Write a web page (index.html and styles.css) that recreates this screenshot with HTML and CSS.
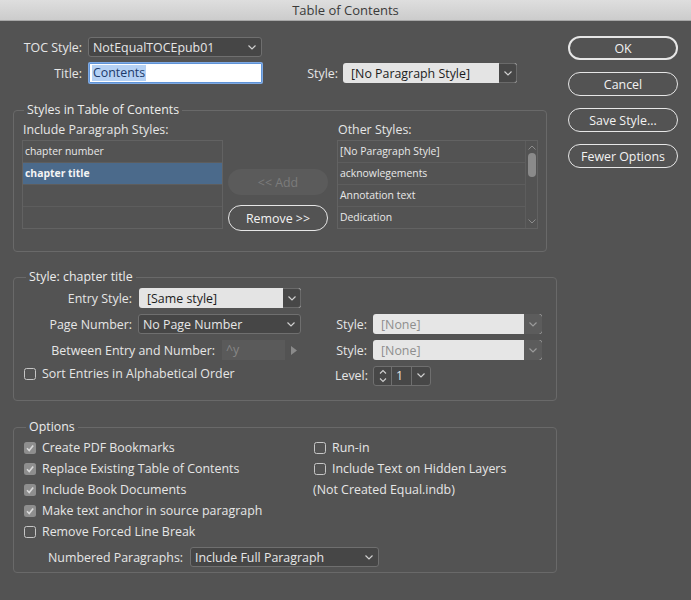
FILE: index.html
```html
<!DOCTYPE html>
<html>
<head>
<meta charset="utf-8">
<link rel="stylesheet" href="styles.css">
</head>
<body>
<div class="titlebar">Table of Contents</div>
<div class="body">
  <div class="main">
    <div class="toprow r1">
      <span class="lbl top-lbl">TOC Style:</span>
      <div class="select dark toc-sel"><span class="sel-text">NotEqualTOCEpub01</span><svg class="chev" width="8" height="5" viewBox="0 0 8 5"><polyline points="0.5,0.5 4,4 7.5,0.5"/></svg></div>
    </div>
    <div class="toprow r2">
      <span class="lbl top-lbl">Title:</span>
      <div class="input title-input"><span class="selected-text">Contents</span></div>
      <span class="lbl style-lbl">Style:</span>
      <div class="select light para-sel"><span class="sel-text">[No Paragraph Style]</span><span class="arrowbox"><svg class="chev" width="8" height="5" viewBox="0 0 8 5"><polyline points="0.5,0.5 4,4 7.5,0.5"/></svg></span></div>
    </div>

    <fieldset class="group g1">
      <legend>Styles in Table of Contents</legend>
      <div class="g1-row">
        <div class="col-list">
          <div class="caption">Include Paragraph Styles:</div>
          <div class="list">
            <div class="row">chapter number</div>
            <div class="row sel">chapter title</div>
            <div class="row"></div>
            <div class="row last"></div>
          </div>
        </div>
        <div class="col-mid">
          <div class="btn disabled add-btn">&lt;&lt; Add</div>
          <div class="btn remove-btn">Remove &gt;&gt;</div>
        </div>
        <div class="col-list col-other">
          <div class="caption">Other Styles:</div>
          <div class="list list-scroll">
            <div class="rows">
              <div class="row">[No Paragraph Style]</div>
              <div class="row">acknowlegements</div>
              <div class="row">Annotation text</div>
              <div class="row last">Dedication</div>
            </div>
            <div class="scrollbar">
              <svg class="sb-arrow" width="8" height="5" viewBox="0 0 8 5"><polyline points="0.5,4.5 4,1 7.5,4.5"/></svg>
              <div class="thumb"></div>
              <svg class="sb-arrow down" width="8" height="5" viewBox="0 0 8 5"><polyline points="0.5,0.5 4,4 7.5,0.5"/></svg>
            </div>
          </div>
        </div>
      </div>
    </fieldset>

    <fieldset class="group g2">
      <legend>Style: chapter title</legend>
      <div class="g2-grid">
        <div class="cell">
          <span class="lbl lbl-entry">Entry Style:</span>
          <div class="select light entry-sel"><span class="sel-text">[Same style]</span><span class="arrowbox"><svg class="chev" width="8" height="5" viewBox="0 0 8 5"><polyline points="0.5,0.5 4,4 7.5,0.5"/></svg></span></div>
        </div>
        <div class="cell"></div>
        <div class="cell">
          <span class="lbl lbl-entry">Page Number:</span>
          <div class="select dark page-sel"><span class="sel-text">No Page Number</span><svg class="chev" width="8" height="5" viewBox="0 0 8 5"><polyline points="0.5,0.5 4,4 7.5,0.5"/></svg></div>
        </div>
        <div class="cell">
          <span class="lbl lbl-right">Style:</span>
          <div class="select light disabled none-sel"><span class="sel-text">[None]</span><span class="arrowbox"><svg class="chev" width="8" height="5" viewBox="0 0 8 5"><polyline points="0.5,0.5 4,4 7.5,0.5"/></svg></span></div>
        </div>
        <div class="cell">
          <span class="lbl lbl-between">Between Entry and Number:</span>
          <div class="between-field">^y</div>
          <svg class="tri" width="6" height="9" viewBox="0 0 6 9"><polygon points="0,0 6,4.5 0,9"/></svg>
        </div>
        <div class="cell">
          <span class="lbl lbl-right">Style:</span>
          <div class="select light disabled none-sel"><span class="sel-text">[None]</span><span class="arrowbox"><svg class="chev" width="8" height="5" viewBox="0 0 8 5"><polyline points="0.5,0.5 4,4 7.5,0.5"/></svg></span></div>
        </div>
        <div class="cell cell-sort">
          <span class="cb"></span><span class="cb-text">Sort Entries in Alphabetical Order</span>
        </div>
        <div class="cell cell-level">
          <span class="lbl lbl-right">Level:</span>
          <div class="level">
            <span class="stepper"><svg width="8" height="14" viewBox="0 0 8 14"><polyline points="1,4.5 4,1.5 7,4.5"/><polyline points="1,9.5 4,12.5 7,9.5"/></svg></span>
            <span class="lvl-field">1</span>
            <span class="lvl-arrow"><svg class="chev" width="8" height="5" viewBox="0 0 8 5"><polyline points="0.5,0.5 4,4 7.5,0.5"/></svg></span>
          </div>
        </div>
      </div>
    </fieldset>

    <fieldset class="group g3">
      <legend>Options</legend>
      <div class="g3-grid">
        <div class="cell"><span class="cb checked"><svg width="12" height="12" viewBox="0 0 12 12"><polyline points="3,6.3 5.2,8.5 9.2,3.5"/></svg></span><span class="cb-text">Create PDF Bookmarks</span></div>
        <div class="cell right"><span class="cb"></span><span class="cb-text">Run-in</span></div>
        <div class="cell"><span class="cb checked"><svg width="12" height="12" viewBox="0 0 12 12"><polyline points="3,6.3 5.2,8.5 9.2,3.5"/></svg></span><span class="cb-text">Replace Existing Table of Contents</span></div>
        <div class="cell right"><span class="cb"></span><span class="cb-text">Include Text on Hidden Layers</span></div>
        <div class="cell"><span class="cb checked"><svg width="12" height="12" viewBox="0 0 12 12"><polyline points="3,6.3 5.2,8.5 9.2,3.5"/></svg></span><span class="cb-text">Include Book Documents</span></div>
        <div class="cell right note">(Not Created Equal.indb)</div>
        <div class="cell"><span class="cb checked"><svg width="12" height="12" viewBox="0 0 12 12"><polyline points="3,6.3 5.2,8.5 9.2,3.5"/></svg></span><span class="cb-text">Make text anchor in source paragraph</span></div>
        <div class="cell"></div>
        <div class="cell"><span class="cb"></span><span class="cb-text">Remove Forced Line Break</span></div>
        <div class="cell"></div>
        <div class="cell numbered">
          <span class="lbl">Numbered Paragraphs:</span>
          <div class="select dark num-sel"><span class="sel-text">Include Full Paragraph</span><svg class="chev" width="8" height="5" viewBox="0 0 8 5"><polyline points="0.5,0.5 4,4 7.5,0.5"/></svg></div>
        </div>
      </div>
    </fieldset>
  </div>

  <div class="side">
    <div class="btn default">OK</div>
    <div class="btn">Cancel</div>
    <div class="btn">Save Style...</div>
    <div class="btn">Fewer Options</div>
  </div>
</div>
</body>
</html>
```

FILE: styles.css
```css
html, body {
  margin: 0;
  padding: 0;
}
body {
  width: 691px;
  height: 600px;
  overflow: hidden;
  background: #535353;
  font-family: "Open Sans", "DejaVu Sans", sans-serif;
  font-size: 12.4px;
  color: #e6e6e6;
}

.titlebar {
  height: 21px;
  line-height: 21px;
  text-align: center;
  background: linear-gradient(#dedede, #cbcbcb);
  color: #3a3a3a;
  font-size: 13px;
  box-shadow: inset 0 -1px 0 #a8a8a8;
}

.body {
  display: flex;
  align-items: flex-start;
}
.main {
  width: 557px;
  padding-left: 13px;
  box-sizing: border-box;
}
.side {
  margin-left: 11px;
  padding-top: 15px;
  width: 110px;
  display: flex;
  flex-direction: column;
  gap: 12px;
}

.btn {
  height: 24px;
  box-sizing: border-box;
  border: 1.5px solid #e6e6e6;
  border-radius: 13px;
  display: flex;
  align-items: center;
  justify-content: center;
  color: #f2f2f2;
}
.btn.default {
  border-width: 2px;
}
.btn.disabled {
  border: none;
  background: #5b5b5b;
  color: #7c7c7c;
}

.lbl {
  white-space: nowrap;
  text-align: right;
  flex: none;
}

.toprow {
  display: flex;
  align-items: center;
  height: 20px;
}
.r1 { margin-top: 16px; }
.r2 { margin-top: 6px; }
.top-lbl { width: 69px; }

.select {
  height: 20px;
  box-sizing: border-box;
  border-radius: 3px;
  display: flex;
  align-items: center;
  flex: none;
  overflow: hidden;
}
.select .sel-text {
  flex: 1;
  white-space: nowrap;
}
.select .chev polyline,
.lvl-arrow .chev polyline {
  fill: none;
  stroke: #cfcfcf;
  stroke-width: 1.2;
}
.select.dark {
  background: #464646;
  border: 1px solid #6f6f6f;
  padding-left: 4px;
  padding-right: 5px;
}
.select.light {
  background: #e4e4e4;
  color: #1c1c1c;
  padding-left: 8px;
}
.select.light .arrowbox {
  width: 17px;
  align-self: stretch;
  background: #474747;
  display: flex;
  align-items: center;
  justify-content: center;
  border: 1px solid #6a6a6a;
  border-left: none;
  border-radius: 0 3px 3px 0;
}
.select.light.disabled {
  color: #8e8e8e;
  background: #e6e6e6;
}
.select.light.disabled .arrowbox {
  background: #5c5c5c;
  border: none;
  width: 18px;
}
.select.light.disabled .chev polyline {
  stroke: #9a9a9a;
}

.toc-sel {
  margin-left: 6px;
  width: 174px;
}
.title-input {
  margin-left: 7px;
  width: 173px;
  height: 20px;
  box-sizing: border-box;
  background: #ffffff;
  border: 1px solid #5f93d6;
  box-shadow: 0 0 0 1px #7ea9e3;
  border-radius: 1px;
  padding-left: 2px;
  display: flex;
  align-items: center;
}
.selected-text {
  background: #b5d1f4;
  color: #1c3b6b;
  padding: 0 1px;
  line-height: 16px;
}
.style-lbl {
  margin-left: 40px;
  width: 36px;
}
.para-sel {
  margin-left: 5px;
  width: 174px;
}

/* group boxes */
.group {
  margin: 0;
  border: 1px solid #696969;
  border-radius: 4px;
  min-width: 0;
  box-sizing: border-box;
}
.group legend {
  padding: 0 3px;
  margin-left: 2px;
  line-height: 16px;
  color: #ececec;
}

.g1 {
  width: 534px;
  margin-top: 19px;
  padding: 4px 8px 20px 8px;
}
.g1-row {
  display: flex;
}
.col-list {
  width: 201px;
}
.col-other {
  margin-left: 9px;
}
.caption {
  line-height: 16px;
  padding-left: 1px;
  margin-bottom: 2px;
  white-space: nowrap;
}
.list {
  height: 89px;
  box-sizing: border-box;
  border: 1px solid #626262;
  font-size: 10.4px;
  color: #e8e8e8;
}
.row {
  height: 21px;
  line-height: 21px;
  border-bottom: 1px solid #5d5d5d;
  padding-left: 2px;
  white-space: nowrap;
}
.row.last {
  border-bottom: none;
}
.row.sel {
  background: #4b6a8b;
  font-weight: bold;
  color: #f4f4f4;
}
.list-scroll {
  display: flex;
}
.rows {
  flex: 1;
  border-right: 1px solid #5d5d5d;
}
.scrollbar {
  width: 11px;
  display: flex;
  flex-direction: column;
  align-items: center;
  padding-top: 4px;
}
.sb-arrow polyline {
  fill: none;
  stroke: #8c8c8c;
  stroke-width: 1;
}
.thumb {
  width: 8px;
  height: 24px;
  border-radius: 4px;
  background: #8a8a8a;
  margin-top: 3px;
}
.sb-arrow.down {
  margin-top: auto;
  margin-bottom: 4px;
}
.col-mid {
  width: 100px;
  margin-left: 5px;
  padding-top: 47px;
  display: flex;
  flex-direction: column;
}
.add-btn {
  height: 26px;
}
.remove-btn {
  height: 26px;
  margin-top: 10px;
}

/* style group */
.g2 {
  width: 544px;
  margin-top: 17px;
  padding: 3px 14px 14px 10px;
}
.g2-grid {
  display: grid;
  grid-template-columns: 277px 207px;
  column-gap: 34px;
  grid-auto-rows: 20px;
  row-gap: 6px;
}
.cell {
  display: flex;
  align-items: center;
  white-space: nowrap;
}
.cell-sort {
  align-items: flex-start;
  padding-top: 2px;
}
.cell-sort .cb-text {
  line-height: 12px;
}
.cell-level {
  margin-top: -1px;
}
.lbl-entry {
  width: 108px;
  margin-right: 7px;
}
.entry-sel {
  width: 162px;
}
.page-sel {
  width: 163px;
  margin-left: -1px;
}
.lbl-between {
  width: 191px;
  margin-right: 7px;
}
.between-field {
  width: 63px;
  height: 20px;
  box-sizing: border-box;
  background: #5a5a5a;
  color: #878787;
  padding-left: 4px;
  line-height: 20px;
}
.tri {
  margin-left: 6px;
}
.tri polygon {
  fill: #8a8a8a;
}
.lbl-right {
  width: 32px;
  margin-right: 6px;
}
.none-sel {
  width: 169px;
}
.cb {
  width: 12px;
  height: 12px;
  box-sizing: border-box;
  border: 1px solid #c6c6c6;
  border-radius: 2.5px;
  flex: none;
  display: block;
}
.cb.checked {
  border: none;
  background: #8e8e8e;
}
.cb.checked svg {
  display: block;
}
.cb.checked polyline {
  fill: none;
  stroke: #d9d9d9;
  stroke-width: 1.6;
}
.cb-text {
  margin-left: 6px;
}
.level {
  display: flex;
  height: 20px;
  box-sizing: border-box;
  border: 1px solid #6f6f6f;
  border-radius: 3px;
  background: #474747;
}
.stepper {
  width: 17px;
  border-right: 1px solid #6f6f6f;
  display: flex;
  align-items: center;
  justify-content: center;
}
.stepper polyline {
  fill: none;
  stroke: #cfcfcf;
  stroke-width: 1.1;
}
.lvl-field {
  width: 20px;
  border-right: 1px solid #6f6f6f;
  padding-left: 4px;
  box-sizing: border-box;
  line-height: 18px;
}
.lvl-arrow {
  width: 18px;
  display: flex;
  align-items: center;
  justify-content: center;
}

/* options group */
.g3 {
  width: 544px;
  margin-top: 18px;
  padding: 2px 14px 9px 10px;
}
.g3-grid {
  display: grid;
  grid-template-columns: 289px 1fr;
  grid-auto-rows: 21px;
}
.cell.right {
  padding-left: 1px;
}
.cell.note {
  padding-left: 0;
}
.numbered {
  grid-column: 1 / span 2;
  margin-top: 5px;
  height: 20px;
  padding-left: 24px;
}
.numbered .lbl {
  width: 132px;
  text-align: left;
}
.num-sel {
  margin-left: 10px;
  width: 189px;
}
```
